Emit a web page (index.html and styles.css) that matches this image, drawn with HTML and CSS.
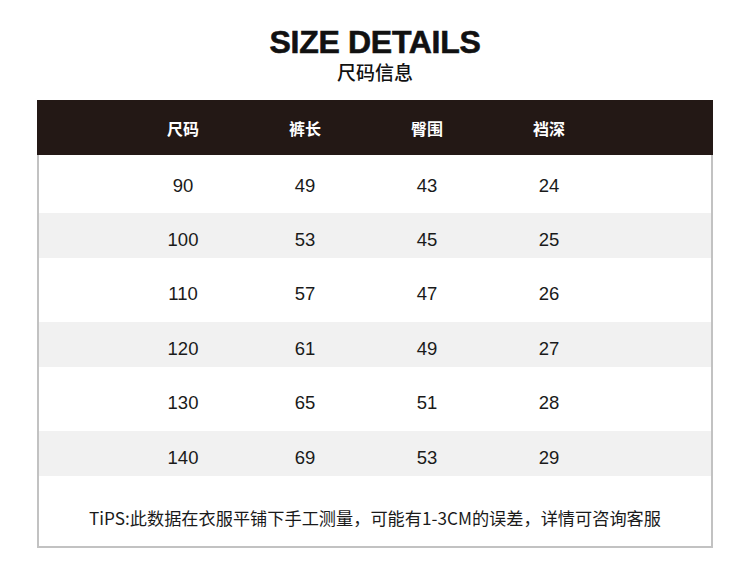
FILE: index.html
```html
<!DOCTYPE html>
<html lang="zh">
<head>
<meta charset="utf-8">
<link rel="stylesheet" href="styles.css">
</head>
<body>
<div class="page">
  <div class="title">
    <h1>SIZE DETAILS</h1>
    <h2>尺码信息</h2>
  </div>
  <div class="box">
    <div class="row head"><span>尺码</span><span>裤长</span><span>臀围</span><span>裆深</span></div>
    <div class="row first"><span>90</span><span>49</span><span>43</span><span>24</span></div>
    <div class="row gray"><span>100</span><span>53</span><span>45</span><span>25</span></div>
    <div class="row white"><span>110</span><span>57</span><span>47</span><span>26</span></div>
    <div class="row gray"><span>120</span><span>61</span><span>49</span><span>27</span></div>
    <div class="row white"><span>130</span><span>65</span><span>51</span><span>28</span></div>
    <div class="row gray"><span>140</span><span>69</span><span>53</span><span>29</span></div>
    <div class="tips">TiPS:此数据在衣服平铺下手工测量，可能有1-3CM的误差，详情可咨询客服</div>
  </div>
</div>
</body>
</html>
```
FILE: styles.css
```css
* { box-sizing: border-box; }
html, body { margin: 0; padding: 0; background: #fff; }
.page {
  width: 750px;
  height: 561px;
  padding-top: 26px;
  font-family: "Liberation Sans", "Noto Sans CJK SC", sans-serif;
  color: #1a1a1a;
}
.title { text-align: center; }
.title h1 {
  margin: 0;
  font-family: "Liberation Sans", sans-serif;
  font-weight: 700;
  font-size: 32px;
  line-height: 32px;
  letter-spacing: -0.3px;
  color: #111;
  -webkit-text-stroke: 0.6px #111;
}
.title h2 {
  margin: 0;
  margin-top: 2px;
  font-family: "Noto Sans CJK SC", sans-serif;
  font-weight: 500;
  font-size: 19px;
  line-height: 24px;
  color: #111;
}
.box {
  margin: 16px 0 0 37px;
  width: 676px;
  border-left: 2px solid #c2c2c2;
  border-right: 2px solid #c2c2c2;
  border-bottom: 2px solid #c2c2c2;
}
.row {
  display: grid;
  grid-template-columns: 122px 122px 122px 122px;
  padding-left: 83px;
  align-items: center;
  font-size: 18.5px;
}
.row span { text-align: center; }
.head {
  height: 55px;
  margin: 0 -2px;
  padding-left: 85px;
  background: #231815;
  color: #fff;
  font-family: "Noto Sans CJK SC", sans-serif;
  font-weight: 700;
  font-size: 16px;
}
.first { height: 58px; padding-top: 3px; }
.gray { height: 45px; padding-top: 8px; background: #f1f1f1; }
.white { height: 64px; padding-top: 8px; }
.tips {
  height: 70px;
  padding-top: 30px;
  text-align: center;
  font-family: "Noto Sans CJK SC", sans-serif;
  font-size: 17.2px;
  line-height: 24px;
  color: #1a1a1a;
}
```
